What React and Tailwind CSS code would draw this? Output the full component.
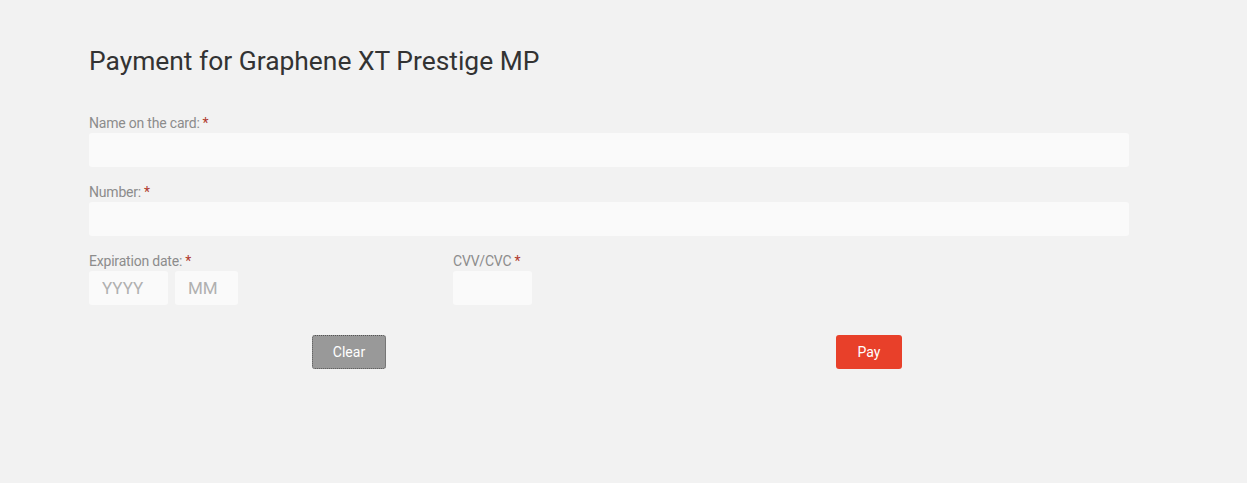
export default function App() {
  const label = "block h-[19px] text-[14px] leading-[19px] text-[#8c8c8c] tracking-[-0.2px]";
  const input = "h-[34px] rounded-[3px] bg-[#fafafa] outline-none pl-[13px] pr-3 text-[17px] text-[#555] placeholder:text-[#b0b0b0]";
  const star = <span className="text-[#b03a2e] ml-[3px]">*</span>;
  return (
    <div className="min-h-[483px] w-full bg-[#f2f2f2] pl-[89px] pt-[44px]" style={{ fontFamily: "Roboto, 'Liberation Sans', sans-serif" }}>
      <div className="w-[1040px]">
        <h1 className="text-[26.4px] leading-[34px] text-[#333] font-normal">Payment for Graphene XT Prestige MP</h1>
        <div className="mt-[36px]">
          <label className={label}>Name on the card:{star}</label>
          <input className={input + " w-full"} />
        </div>
        <div className="mt-[16px]">
          <label className={label}>Number:{star}</label>
          <input className={input + " w-full"} />
        </div>
        <div className="mt-[16px] flex">
          <div className="w-[364px]">
            <label className={label}>Expiration date:{star}</label>
            <div className="flex gap-[7px]">
              <input className={input + " w-[79px]"} placeholder="YYYY" />
              <input className={input + " w-[63px]"} placeholder="MM" />
            </div>
          </div>
          <div>
            <label className={label}>CVV/CVC{star}</label>
            <input className={input + " w-[79px]"} />
          </div>
        </div>
        <div className="mt-[30px] flex">
          <div className="w-1/2 flex justify-center">
            <button className="h-[34px] w-[74px] rounded-[3px] bg-[#999] border border-dotted border-[#555] text-white text-[14px]">Clear</button>
          </div>
          <div className="w-1/2 flex justify-center">
            <button className="h-[34px] w-[66px] rounded-[3px] bg-[#e8402a] text-white text-[14px]">Pay</button>
          </div>
        </div>
      </div>
    </div>
  );
}
